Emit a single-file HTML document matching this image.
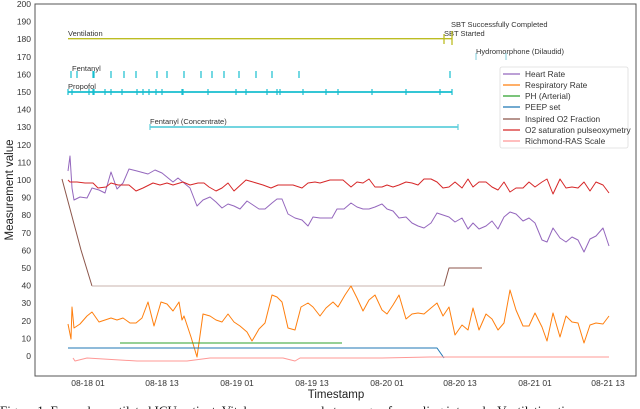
<!DOCTYPE html><html><head><meta charset="utf-8"><style>
body{margin:0;background:#fff;width:640px;height:409px;overflow:hidden}
svg{display:block;font-family:"Liberation Sans",sans-serif}
</style></head><body>
<svg width="640" height="409" viewBox="0 0 640 409" xmlns="http://www.w3.org/2000/svg">
<rect x="35" y="4" width="601" height="372" fill="none" stroke="#555" stroke-width="1"/>
<g font-size="8.5" fill="#333" text-anchor="end">
<text x="31" y="7">200</text><text x="31" y="24.6">190</text><text x="31" y="42.2">180</text><text x="31" y="59.8">170</text><text x="31" y="77.4">160</text><text x="31" y="95">150</text><text x="31" y="112.6">140</text><text x="31" y="130.2">130</text><text x="31" y="147.8">120</text><text x="31" y="165.4">110</text><text x="31" y="183">100</text><text x="31" y="200.6">90</text><text x="31" y="218.2">80</text><text x="31" y="235.8">70</text><text x="31" y="253.4">60</text><text x="31" y="271">50</text><text x="31" y="288.6">40</text><text x="31" y="306.2">30</text><text x="31" y="323.8">20</text><text x="31" y="341.4">10</text><text x="31" y="359">0</text>
</g>
<g font-size="8.5" fill="#333" text-anchor="middle">
<text x="88" y="386">08-18 01</text><text x="162" y="386">08-18 13</text><text x="237" y="386">08-19 01</text><text x="312" y="386">08-19 13</text><text x="387" y="386">08-20 01</text><text x="460" y="386">08-20 13</text><text x="535" y="386">08-21 01</text><text x="608" y="386">08-21 13</text>
</g>
<text x="336" y="398" font-size="11.5" fill="#222" text-anchor="middle">Timestamp</text>
<text transform="translate(13,190) rotate(-90)" font-size="11.5" fill="#222" text-anchor="middle">Measurement value</text>
<text x="0" y="415" font-family="Liberation Serif,serif" font-size="13" fill="#111">Figure 1: Example ventilated ICU patient. Vitals are measured at a range of sampling intervals. Ventilation times are</text>

<g font-size="7.5" fill="#333">
<text x="68" y="36">Ventilation</text>
<text x="451" y="27">SBT Successfully Completed</text>
<text x="444" y="36">SBT Started</text>
<text x="476" y="54">Hydromorphone (Dilaudid)</text>
<text x="72" y="71">Fentanyl</text>
<text x="68" y="89">Propofol</text>
<text x="150" y="124">Fentanyl (Concentrate)</text>
</g>
<g stroke="#bcbd22" stroke-width="1.3"><line x1="68" y1="38.7" x2="452" y2="38.7"/><line x1="444" y1="34" x2="444" y2="44"/><line x1="452" y1="31" x2="452" y2="45"/></g>
<g stroke="#9edae5" stroke-width="1.3"><line x1="476" y1="53" x2="476" y2="60"/><line x1="506" y1="53" x2="506" y2="60"/></g>
<g stroke="#17becf" stroke-width="1.2" fill="none">
<path d="M71 71v7M77 71v7M93 71v7M94 71v7M111 71v7M124 71v7M136 71v7M157 71v7M167 71v7M184 71v7M201 71v7M212 71v7M224 71v7M239 71v7M256 71v7M272 71v7M299 71v7M450 71v7"/>
<line x1="68" y1="92" x2="452" y2="92" stroke-width="1.8"/>
<path d="M68 89v6M72 89v6M89 89v6M93 89v6M94 89v6M105 89v6M111 89v6M122 89v6M137 89v6M143 89v6M149 89v6M156 89v6M162 89v6M182 89v6M183 89v6M208 89v6M236 89v6M246 89v6M267 89v6M277 89v6M280 89v6M303 89v6M326 89v6M338 89v6M372 89v6M406 89v6M440 89v6M452 89v6"/>
<line x1="150" y1="127" x2="458" y2="127" stroke-width="1.8" stroke="#5fcfdc"/><path d="M150 124v6M458 124v6" stroke="#5fcfdc"/>
</g>

<g fill="none" stroke-width="1" stroke-linejoin="round">
<polyline stroke="#9467bd" points="68,171 70,156 72,188 74,200 80,197 87,198 92,188 99,190 105,193 111,172 117,189 123,183 129,169 137,171 148,174 155,170 162,173 173,182 178,178 190,188 197,206 203,200 210,197 216,202 222,208 228,204 234,206 240,209 247,201 253,205 259,209 265,209 272,203 277,199 282,199 288,214 295,218 302,220 308,226 313,217 320,218 326,218 332,218 337,209 344,209 351,203 357,207 363,209 369,209 375,207 382,204 387,209 393,211 399,218 406,217 412,223 418,226 424,228 431,223 437,213 443,215 449,217 455,222 462,218 468,229 473,223 479,229 486,226 492,221 498,229 504,217 510,212 516,214 523,221 529,218 535,223 542,240 547,242 553,228 560,238 566,242 572,237 578,240 584,252 590,239 596,236 603,228 609,246"/>
<polyline stroke="#d62728" points="68,180 70,182 77,182 85,183 93,183 98,188 106,187 111,183 118,185 129,185 136,191 143,188 153,183 160,185 167,183 173,185 183,182 190,185 198,183 204,183 209,187 216,191 222,188 228,183 234,191 246,180 253,182 263,185 271,188 278,185 293,185 302,188 308,183 315,182 320,183 330,180 343,180 351,187 357,182 363,183 369,179 375,187 382,187 387,185 393,187 399,185 406,182 412,183 418,185 424,179 431,179 437,182 443,188 449,187 455,182 462,188 468,179 473,187 479,182 486,182 492,187 498,190 504,182 510,192 516,188 523,188 529,182 535,187 542,182 547,179 553,194 560,179 566,188 572,187 578,188 584,182 590,191 596,182 603,185 609,193"/>
<polyline stroke="#8c564b" points="62,179 81,250 92,286"/>
<polyline stroke="#c9b3ad" points="92,286 444,286"/>
<polyline stroke="#8c564b" points="444,286 449,268 482,268"/>
<polyline stroke="#ff7f0e" points="68,324 71,339 72,307 74,328 80,324 87,316 92,312 99,322 105,320 111,318 117,320 123,318 130,323 136,323 142,318 148,302 154,326 161,302 167,304 173,311 179,302 182,320 184,316 191,337 197,357 203,314 210,316 216,320 222,322 228,314 234,322 240,326 247,332 252,341 259,329 265,323 272,295 277,297 282,302 288,328 295,330 301,307 308,303 313,307 320,316 326,308 333,302 338,307 345,295 351,286 357,298 363,311 369,300 375,295 382,310 387,314 393,305 399,295 406,319 412,314 418,313 424,314 431,308 437,303 443,316 449,307 455,335 462,325 468,330 473,308 479,330 486,314 492,319 498,330 504,323 510,290 516,310 523,326 529,326 535,313 542,327 547,341 553,313 560,337 566,316 572,322 578,323 584,343 590,325 596,323 603,324 609,316"/>
<polyline stroke="#2ca02c" points="120,343 342,343"/>
<polyline stroke="#1f77b4" points="68,348 437,348 444,358"/>
<polyline stroke="#ff9896" points="73,358 75,361 87,358 137,361 187,361 210,358 247,358 283,358 295,361 300,358 382,358 430,357 609,357"/>
</g>

<rect x="500" y="67" width="128" height="81" fill="#fff" fill-opacity="0.85" stroke="#ddd" stroke-width="0.8" rx="2"/>
<g stroke-width="1.2">
<line x1="503" y1="74" x2="520" y2="74" stroke="#9467bd"/>
<line x1="503" y1="85" x2="520" y2="85" stroke="#ff7f0e"/>
<line x1="503" y1="96" x2="520" y2="96" stroke="#2ca02c"/>
<line x1="503" y1="107" x2="520" y2="107" stroke="#1f77b4"/>
<line x1="503" y1="119" x2="520" y2="119" stroke="#8c564b"/>
<line x1="503" y1="130" x2="520" y2="130" stroke="#d62728"/>
<line x1="503" y1="141" x2="520" y2="141" stroke="#ff9896"/>
</g>
<g font-size="8.3" fill="#333">
<text x="525" y="77">Heart Rate</text>
<text x="525" y="88">Respiratory Rate</text>
<text x="525" y="99">PH (Arterial)</text>
<text x="525" y="110">PEEP set</text>
<text x="525" y="122">Inspired O2 Fraction</text>
<text x="525" y="133">O2 saturation pulseoxymetry</text>
<text x="525" y="144">Richmond-RAS Scale</text>
</g>
</svg>
</body></html>
